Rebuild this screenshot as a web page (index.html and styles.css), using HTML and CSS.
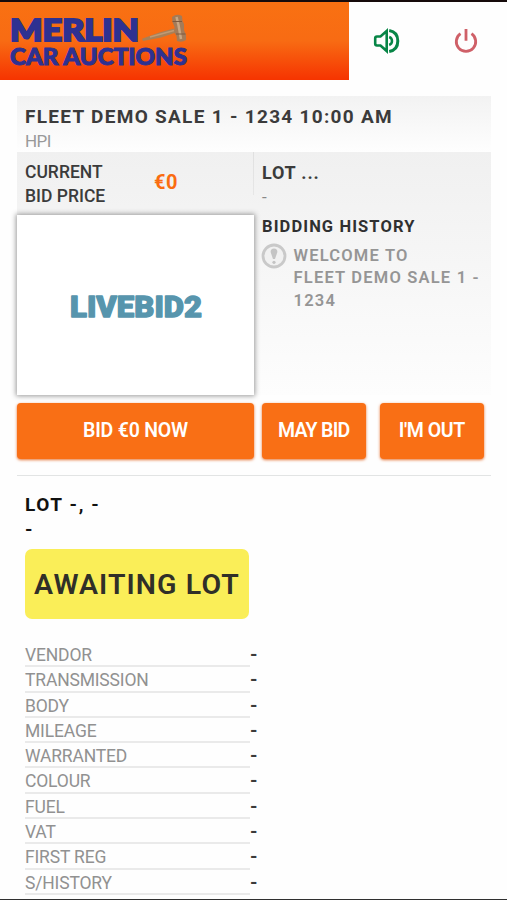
FILE: index.html
```html
<!DOCTYPE html>
<html lang="en">
<head>
<meta charset="utf-8">
<title>Merlin Car Auctions</title>
<link rel="stylesheet" href="styles.css">
</head>
<body>
<div class="page">
  <header class="header">
    <div class="brand">
      <svg class="logo" width="200" height="78" viewBox="0 2 200 78">
        <text class="logo-text" x="10" y="41" font-size="30" textLength="129" lengthAdjust="spacingAndGlyphs">MERLIN</text>
        <text class="logo-text small" x="10" y="65" font-size="22.500" textLength="177" lengthAdjust="spacingAndGlyphs">CAR AUCTIONS</text>
        <path d="M142 38.700L160 32.300L174 28.500L176 32.500L161 37.500L143 41Z" fill="#a98057"/>
        <path d="M150 37L174 30.500" stroke="#c09a74" stroke-width="1.500"/>
        <path d="M172 17q5-4 10-1l.5 5 1.500 3v6l2 5v5q-4 3-9 1l-.5-5-2-3v-6l-2-5z" fill="#a47b58"/>
        <path d="M176.500 17l2 8 2.500 14" stroke="#c9a784" stroke-width="2.500" fill="none"/>
        <path d="M172.500 21.500h9.500M176 34h9.500" stroke="#7d5a40" stroke-width="1" fill="none"/>
      </svg>
    </div>
    <div class="tools">
      <svg class="tool" width="28" height="28" viewBox="0 0 28 28" fill="none" stroke="#078546">
        <path d="M13.700 4L7.500 9.500H4Q2.200 9.500 2.200 11.500V16.500Q2.200 18.500 4 18.500H7.500L13.700 24Z" stroke-width="2.600"/>
        <path d="M16.200 10Q19 11 19 14T16.200 18" stroke-width="2.500"/>
        <path d="M16.200 3.500Q24.800 5 24.800 14T16.200 24.500" stroke-width="3"/>
      </svg>
      <svg class="tool" width="28" height="28" viewBox="0 0 28 28" fill="none" stroke="#cf6068" stroke-width="2.800">
        <path d="M8.500 6.700A9.700 9.700 0 1 0 19.500 6.700M14 2V13.800"/>
      </svg>
    </div>
  </header>
  <main class="main">
    <section class="title-bar">
      <h1 class="sale">FLEET DEMO SALE 1 - 1234 10:00 AM</h1>
      <p class="sub">HPI</p>
    </section>
    <section class="bid-panel">
      <div class="left">
        <div class="price">
          <div class="price-label">CURRENT<br>BID PRICE</div>
          <div class="amount">€0</div>
        </div>
        <div class="photo">
          <svg width="237" height="180" viewBox="0 0 237 180"><text class="livebid" x="53" y="102" textLength="132" lengthAdjust="spacingAndGlyphs">LIVEBID2</text></svg>
        </div>
      </div>
      <div class="right">
        <div class="lot">LOT ...</div>
        <div class="dash">-</div>
        <h2 class="history">BIDDING HISTORY</h2>
        <div class="message">
          <svg width="26" height="26" viewBox="0 0 26 26"><circle cx="13" cy="13" r="11" fill="#f1f1f1" stroke="#c9c9c9" stroke-width="2.800"/><path d="M13 5.500q3.400 0 3.400 3.500L14 16h-2L9.600 9q0-3.500 3.400-3.500z" fill="#c4c4c4"/><circle cx="13" cy="19.300" r="1.600" fill="#c4c4c4"/></svg>
          <p class="message-text">WELCOME TO<br>FLEET DEMO SALE 1 -<br>1234</p>
        </div>
      </div>
    </section>
    <div class="actions">
      <button class="btn wide">BID €0 NOW</button>
      <button class="btn may">MAY BID</button>
      <button class="btn last">I'M OUT</button>
    </div>
    <section class="details">
      <div class="lot-title">LOT -, -<br>-</div>
      <div class="status">AWAITING LOT</div>
      <dl class="specs">
        <div class="row"><dt>VENDOR</dt><dd>-</dd></div>
        <div class="row"><dt>TRANSMISSION</dt><dd>-</dd></div>
        <div class="row"><dt>BODY</dt><dd>-</dd></div>
        <div class="row"><dt>MILEAGE</dt><dd>-</dd></div>
        <div class="row"><dt>WARRANTED</dt><dd>-</dd></div>
        <div class="row"><dt>COLOUR</dt><dd>-</dd></div>
        <div class="row"><dt>FUEL</dt><dd>-</dd></div>
        <div class="row"><dt>VAT</dt><dd>-</dd></div>
        <div class="row"><dt>FIRST REG</dt><dd>-</dd></div>
        <div class="row"><dt>S/HISTORY</dt><dd>-</dd></div>
      </dl>
    </section>
  </main>
</div>
</body>
</html>
```
FILE: styles.css
```css
* { box-sizing: border-box; }
body, h1, h2, p, dl, dd { margin: 0; }
body { background: #fefefe; font-family: Roboto, "Liberation Sans", sans-serif; color: #3b3b3b; }
.page { height: 900px; overflow: hidden; border-top: 2px solid #160b0b; border-bottom: 1px solid #303030; }
.header { display: flex; height: 78px; }
.brand { width: 349px; background: linear-gradient(#f97112 0%, #f86b13 50%, #f63a03 94%, #f63400 100%); }
.logo { display: block; }
.logo-text { font-family: Lato, sans-serif; font-weight: 900; fill: #2e3191; stroke: #2e3191; stroke-width: 2; }
.logo-text.small { stroke-width: 1; }
.tools { display: flex; gap: 51px; padding: 25px 0 0 24px; }
.main { padding: 16px 16px 0 17px; }
.title-bar { height: 56px; padding: 8px 8px 0; background: linear-gradient(#f2f2f2, #fefefe); }
.sale { font-size: 19px; line-height: 25px; font-weight: 700; letter-spacing: 1.3px; white-space: nowrap; }
.sub { font-size: 17px; line-height: 25px; letter-spacing: -.6px; color: #999; }
.bid-panel { display: flex; height: 243px; background: linear-gradient(#f0f0f0, #fdfdfd); }
.left { width: 237px; }
.price { display: flex; height: 63px; padding: 9px 0 0 8px; background: linear-gradient(#e0e0e0, #e6e6e6) right top / 1px 43px no-repeat; }
.price-label { width: 129px; font-size: 17.5px; line-height: 23.5px; font-weight: 500; white-space: nowrap; }
.amount { padding-top: 9px; font-size: 20px; line-height: 24px; font-weight: 700; letter-spacing: .6px; color: #fa6c10; }
.photo { height: 180px; background: #fff; box-shadow: 0 0 5px 1px #999; }
.photo svg { display: block; }
.livebid { font-size: 30px; font-weight: 900; fill: #5795ad; stroke: #5795ad; stroke-width: 1.3; stroke-linejoin: round; }
.right { padding: 9px 0 0 8px; white-space: nowrap; }
.lot { font-size: 18px; line-height: 24px; font-weight: 700; letter-spacing: .8px; }
.dash { font-size: 17px; line-height: 24px; color: #888; }
.history { margin-top: 6px; font-size: 16.5px; line-height: 24px; font-weight: 700; letter-spacing: 1.1px; color: #303030; }
.message { display: flex; gap: 6.5px; margin-top: 4px; margin-left: -1px; }
.message-text { padding-top: 2px; font-size: 16.5px; line-height: 22.3px; font-weight: 600; letter-spacing: 1.2px; color: #959595; }
.actions { display: flex; height: 81px; padding-top: 8px; border-bottom: 1px solid #e2e4e4; }
.btn { width: 103.5px; height: 56px; margin: 0 0 0 8px; padding: 0; border: 0; border-radius: 4px; background: #f96f15; box-shadow: 0 1px 3px #e47436; font: 600 19.5px/56px Roboto, sans-serif; letter-spacing: -.4px; color: #fff; }
.btn.wide { width: 237px; margin: 0; letter-spacing: -.2px; }
.btn.may { letter-spacing: -.7px; }
.btn.last { margin-left: 14.5px; }
.details { padding: 16px 8px 0; }
.lot-title { font-size: 19px; line-height: 25px; font-weight: 700; letter-spacing: 1.6px; color: #111; }
.status { width: 224px; height: 70px; margin-top: 7px; padding-left: 9px; border-radius: 7px; background: #faee58; font-size: 28.5px; line-height: 71px; font-weight: 600; letter-spacing: 1.1px; color: #302f28; white-space: nowrap; }
.specs { margin-top: 24px; }
.row { display: flex; height: 25.3px; }
.row dt { width: 225px; height: 24.3px; border-bottom: 2px solid #eaeaea; font-size: 17.5px; line-height: 24px; letter-spacing: -.17px; color: #919191; }
.row dd { font-size: 19px; line-height: 24px; font-weight: 700; }
```
